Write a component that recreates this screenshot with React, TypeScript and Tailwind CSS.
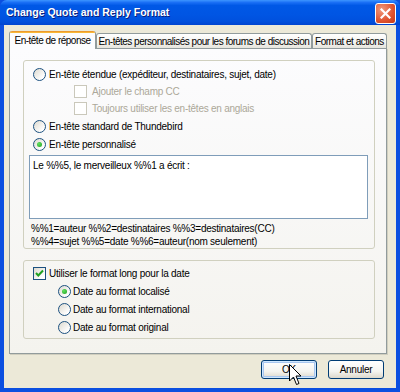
import React from "react";

function Radio({ checked }: { checked?: boolean }) {
  return (
    <span className="relative inline-flex h-[13px] w-[13px] shrink-0 items-center justify-center rounded-full border border-[#1c5180] bg-[linear-gradient(135deg,#dcd9cf,#ffffff_80%)]">
      {checked && (
        <span className="h-[5px] w-[5px] rounded-full bg-[radial-gradient(circle_at_35%_35%,#5fe05f,#21a121)]" />
      )}
    </span>
  );
}

function Check({ checked, disabled }: { checked?: boolean; disabled?: boolean }) {
  return (
    <span
      className={
        disabled
          ? "inline-flex h-[13px] w-[13px] shrink-0 border border-[#cac8bb] bg-white"
          : "inline-flex h-[13px] w-[13px] shrink-0 items-center justify-center border border-[#1c5180] bg-[linear-gradient(135deg,#dcd9cf,#ffffff_80%)]"
      }
    >
      {checked && (
        <svg width="11" height="11" viewBox="0 0 11 11">
          <path d="M2 5 L4.3 7.5 L9 2.5" fill="none" stroke="#21a121" strokeWidth="2" />
        </svg>
      )}
    </span>
  );
}

export default function App() {
  return (
    <div className="relative flex h-[392px] w-[400px] flex-col overflow-hidden bg-[#0b4fe0] font-['Liberation_Sans',Arial,sans-serif] text-[10px] tracking-[-0.25px] text-black">
      {/* Title bar */}
      <div className="flex h-[25px] shrink-0 items-center rounded-t-[7px] bg-[linear-gradient(to_bottom,#3d95ff_0%,#1a6ff5_10%,#0058e6_22%,#0055e3_60%,#0050dd_85%,#0044d0_100%)] pl-[6px] pr-[3px]">
        <span className="flex-1 whitespace-nowrap text-[10.5px] font-bold tracking-[0px] text-white [text-shadow:1px_1px_0_#0a1e7a]">
          Change Quote and Reply Format
        </span>
        <div className="mr-[1px] mt-[2px] flex h-[21px] w-[21px] items-center justify-center rounded-[3px] border border-white bg-[radial-gradient(circle_at_30%_30%,#f09a7e,#e0532f_60%,#c23a17)]">
          <svg width="11" height="11" viewBox="0 0 11 11">
            <path d="M1.5 1.5 L9.5 9.5 M9.5 1.5 L1.5 9.5" stroke="white" strokeWidth="2.2" strokeLinecap="square" />
          </svg>
        </div>
      </div>

      {/* Body */}
      <div className="mx-[4px] mb-[4px] flex flex-1 flex-col bg-[#ece9d8] pl-[5px] pr-[9px] pt-[6px]">
        {/* Tabs */}
        <div className="relative z-10 -mb-px flex h-[18px] items-start whitespace-nowrap tracking-[-0.5px]">
          <div className="flex h-[18px] w-[87px] flex-col rounded-t-[3px] border-x border-[#919b9c] bg-[#fcfcfe]">
            <div className="h-[3px] rounded-t-[3px] bg-[linear-gradient(to_bottom,#e68b2c,#ffc73c)]" />
            <div className="flex flex-1 items-center justify-center pb-[1px]">En-tête de réponse</div>
          </div>
          <div className="mt-[2px] flex h-[15px] w-[216px] items-center justify-center rounded-t-[3px] border-x border-t border-[#919b9c] bg-[linear-gradient(to_bottom,#ffffff,#f3f3ef_60%,#e6e5dd)]">
            En-têtes personnalisés pour les forums de discussion
          </div>
          <div className="mt-[2px] flex h-[15px] w-[75px] items-center justify-center rounded-t-[3px] border-x border-t border-[#919b9c] bg-[linear-gradient(to_bottom,#ffffff,#f3f3ef_60%,#e6e5dd)]">
            Format et actions
          </div>
        </div>

        {/* Panel */}
        <div className="flex h-[306px] w-[378px] flex-col border border-[#919b9c] bg-[linear-gradient(to_bottom,#fcfcfe,#f4f3ee)] px-[13px] pt-[11px] shadow-[1px_1px_0_#d0cebf]">
          {/* Group 1 */}
          <div className="flex h-[189px] w-[352px] flex-col rounded-[3px] border border-[#d0d0bf] pt-[4px]">
            <div className="flex h-[18px] items-center gap-[3px] pl-[9px]">
              <Radio />
              <span>En-tête étendue (expéditeur, destinataires, sujet, date)</span>
            </div>
            <div className="flex h-[17px] items-center gap-[5px] pl-[50px] text-[#aca899]">
              <Check disabled />
              <span>Ajouter le champ CC</span>
            </div>
            <div className="flex h-[17px] items-center gap-[5px] pl-[50px] text-[#aca899]">
              <Check disabled />
              <span>Toujours utiliser les en-têtes en anglais</span>
            </div>
            <div className="flex h-[18px] items-center gap-[3px] pl-[9px]">
              <Radio />
              <span>En-tête standard de Thundebird</span>
            </div>
            <div className="flex h-[18px] items-center gap-[3px] pl-[9px]">
              <Radio checked />
              <span>En-tête personnalisé</span>
            </div>
            <div className="ml-[5px] mt-[2px] h-[64px] w-[339px] border border-[#7f9db9] bg-white px-[3px] pt-[2px]">
              Le %%5, le merveilleux %%1 a écrit :
            </div>
            <div className="mt-[3px] flex h-[13px] items-center pl-[7px]">
              %%1=auteur %%2=destinataires %%3=destinataires(CC)
            </div>
            <div className="flex h-[13px] items-center pl-[7px]">
              %%4=sujet %%5=date %%6=auteur(nom seulement)
            </div>
          </div>

          {/* Group 2 */}
          <div className="mt-[11px] flex h-[79px] w-[352px] flex-col rounded-[3px] border border-[#d0d0bf] pt-[3px]">
            <div className="flex h-[18px] items-center gap-[3px] pl-[9px]">
              <Check checked />
              <span>Utiliser le format long pour la date</span>
            </div>
            <div className="flex h-[18px] items-center gap-[2px] pl-[34px]">
              <Radio checked />
              <span>Date au format localisé</span>
            </div>
            <div className="flex h-[18px] items-center gap-[2px] pl-[34px]">
              <Radio />
              <span>Date au format international</span>
            </div>
            <div className="flex h-[18px] items-center gap-[2px] pl-[34px]">
              <Radio />
              <span>Date au format original</span>
            </div>
          </div>
        </div>

        {/* Buttons */}
        <div className="mt-[6px] flex justify-end gap-[11px] pr-[3px]">
          <button className="flex h-[19px] w-[56px] items-center justify-center rounded-[3px] border border-[#003c74] bg-[linear-gradient(to_bottom,#ffffff,#f4f4f0_60%,#dcd8cc)] shadow-[inset_0_0_0_1px_#cee7ff,inset_0_0_0_2px_#a8c6ef]">
            OK
          </button>
          <button className="flex h-[19px] w-[56px] items-center justify-center rounded-[3px] border border-[#003c74] bg-[linear-gradient(to_bottom,#ffffff,#f4f4f0_60%,#dcd8cc)]">
            Annuler
          </button>
        </div>
      </div>

      {/* Mouse cursor */}
      <svg className="absolute left-[289px] top-[364px]" width="13" height="22" viewBox="0 0 13 22">
        <path d="M0.5 0.5 L0.5 17 L4.5 13 L7.5 20.5 L10 19.5 L7 12 L12 12 Z" fill="white" stroke="black" strokeWidth="1" strokeLinejoin="miter" />
      </svg>
    </div>
  );
}
